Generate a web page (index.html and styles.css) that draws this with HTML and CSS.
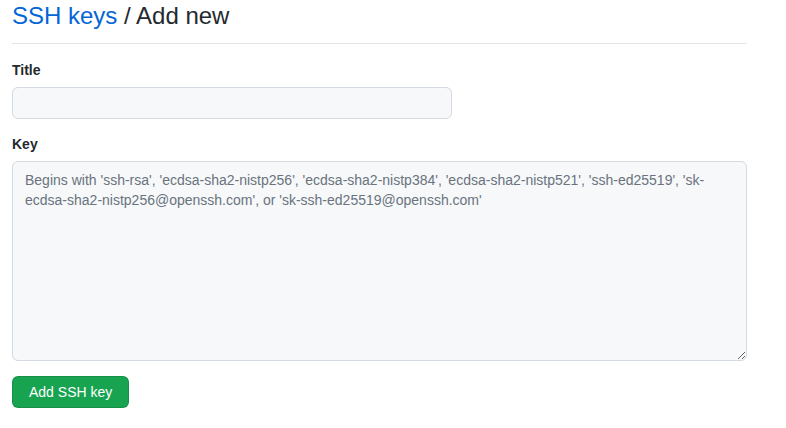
FILE: index.html
```html
<!DOCTYPE html>
<html>
<head>
<meta charset="utf-8">
<link rel="stylesheet" href="styles.css">
</head>
<body>
<div class="page">
  <div class="subhead">
    <h2 class="subhead-heading"><a href="#" class="crumb">SSH keys</a> / Add new</h2>
  </div>
  <form class="form">
    <div class="form-group">
      <label class="label" for="title">Title</label>
      <input id="title" class="input input-title" type="text">
    </div>
    <div class="form-group">
      <label class="label" for="key">Key</label>
      <textarea id="key" class="input input-key" placeholder="Begins with 'ssh-rsa', 'ecdsa-sha2-nistp256', 'ecdsa-sha2-nistp384', 'ecdsa-sha2-nistp521', 'ssh-ed25519', 'sk-ecdsa-sha2-nistp256@openssh.com', or 'sk-ssh-ed25519@openssh.com'"></textarea>
    </div>
    <button type="button" class="btn-primary">Add SSH key</button>
  </form>
</div>
</body>
</html>
```

FILE: styles.css
```css
* { box-sizing: border-box; }
html, body {
  margin: 0;
  padding: 0;
  background: #fff;
  font-family: "Liberation Sans", Arial, sans-serif;
  font-size: 14px;
  line-height: 1.5;
  color: #24292e;
}
.page {
  width: 759px;
  padding: 0 12px;
}
.subhead {
  border-bottom: 1px solid #e1e4e8;
  padding-bottom: 9px;
  margin-bottom: 16px;
}
.subhead-heading {
  margin: 0;
  margin-top: -2px;
  font-size: 24px;
  font-weight: 400;
  line-height: 1.5;
}
.crumb {
  color: #0366d6;
  text-decoration: none;
}
.form-group {
  margin: 15px 0;
}
.form-group:first-child { margin-top: 0; }
.label {
  display: block;
  font-weight: 600;
  font-size: 14px;
  margin: 0 0 6px;
}
.input {
  display: block;
  font-family: "Liberation Sans", Arial, sans-serif;
  font-size: 14px;
  line-height: 20px;
  color: #24292e;
  background: #f6f8fa;
  border: 1px solid #d4dae1;
  border-radius: 6px;
  padding: 5px 12px;
  outline: none;
}
.input-title {
  width: 440px;
  height: 32px;
}
.input-key {
  width: 735px;
  height: 200px;
  padding: 8px 12px;
  resize: vertical;
}
.input-key::placeholder {
  color: #6a737d;
}
.btn-primary {
  display: block;
  margin-top: 15px;
  height: 32px;
  padding: 5px 16px;
  font-family: "Liberation Sans", Arial, sans-serif;
  font-size: 14px;
  line-height: 20px;
  font-weight: 500;
  color: #fff;
  background: #17a350;
  border: 1px solid rgba(27,31,35,0.15);
  border-radius: 6px;
}
```
